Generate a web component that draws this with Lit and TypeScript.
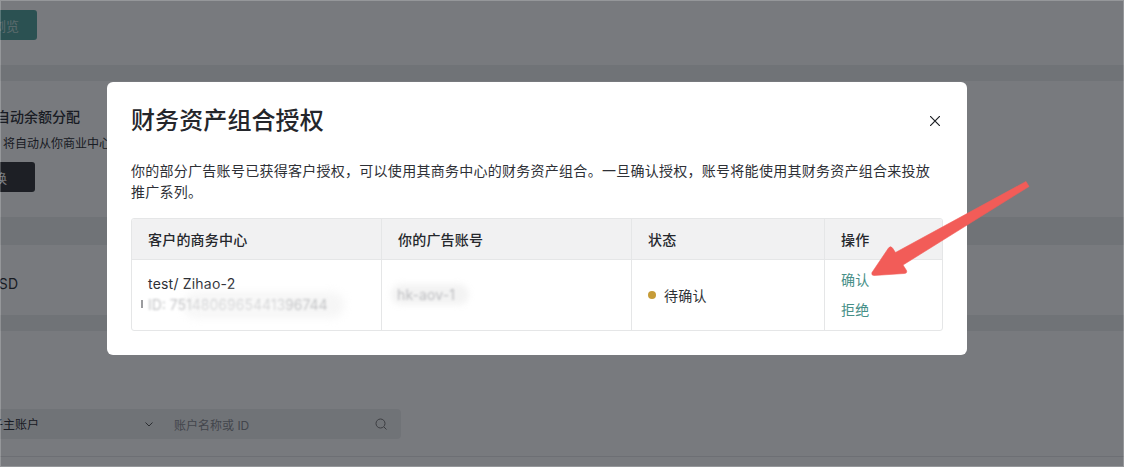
import { LitElement, html, css, svg } from "lit";
import { customElement } from "lit/decorators.js";

@customElement("app-root")
export class AppRoot extends LitElement {
  static styles = css`
    :host {
      display: block;
      position: relative;
      width: 1124px;
      height: 467px;
      overflow: hidden;
      background: #f3f3f4;
      font-family: Inter, "Noto Sans CJK SC", "Liberation Sans", sans-serif;
      font-size: 14px;
      color: #2e3036;
    }
    .page { display: flex; flex-direction: column; height: 467px; }
    .band { background: #eeeff0; flex: none; }
    .b16 { height: 16px; }
    .b28 { height: 28px; }
    .card { background: #fff; flex: none; overflow: hidden; }
    .s1 { height: 65px; padding-top: 10px; box-sizing: border-box; }
    .s2 { height: 136px; padding-top: 26px; box-sizing: border-box; }
    .s3 { height: 70px; display: flex; align-items: center; padding-top: 6px; box-sizing: border-box; }
    .s4 { height: 125px; padding-top: 78px; box-sizing: border-box; }
    .s5 { flex: 1; background: #fff; border-top: 1px solid #e6e7e8; }
    .btn { display: flex; align-items: center; height: 30px; border-radius: 0 3px 3px 0; box-sizing: border-box; white-space: nowrap; overflow: hidden; }
    .teal { width: 37px; background: #55a59e; color: rgba(255, 255, 255, 0.62); font-size: 13px; }
    .teal span { margin-left: -7px; }
    .black { width: 35px; background: #36373b; color: #fff; font-size: 13px; margin-top: 8px; }
    .black span { margin-left: -19px; }
    .sub-t { font-size: 14px; font-weight: 500; line-height: 20px; white-space: nowrap; margin-left: -4px; }
    .sub-d { font-size: 12px; line-height: 20px; margin-top: 7px; white-space: nowrap; margin-left: 3px; }
    .usd { margin-left: -12px; font-size: 14px; letter-spacing: 0.3px; }
    .filter { width: 401px; height: 30px; background: #eeeff0; border-radius: 0 4px 4px 0; display: flex; align-items: center; overflow: hidden; }
    .select { width: 160px; display: flex; align-items: center; justify-content: space-between; padding-right: 7px; box-sizing: border-box; font-size: 12px; flex: none; }
    .select span { margin-left: -9px; padding-bottom: 2px; }
    .input { flex: 1; display: flex; align-items: center; justify-content: space-between; padding: 0 14px; color: #8a8c90; font-size: 12px; }
    .scrim { position: absolute; inset: 0; background: rgba(10, 12, 20, 0.55); box-shadow: inset 0 0 0 1px rgba(255, 255, 255, 0.22); }
    .modal {
      position: absolute; left: 107px; top: 82px; width: 860px; height: 273px;
      background: #fff; border-radius: 6px; box-sizing: border-box; padding: 24px;
      display: flex; flex-direction: column;
    }
    .head { display: flex; justify-content: space-between; align-items: center; height: 30px; }
    h2 { margin: 0; font-size: 24px; font-weight: 500; line-height: 30px; color: #24262b; letter-spacing: 0.1px; }
    .close { display: flex; margin-right: 3px; }
    .desc { margin: 24px 0 0; line-height: 21px; letter-spacing: 0.27px; color: #2e3036; width: 800px; }
    .table {
      margin-top: 16px; width: 812px; height: 113px; border: 1px solid #e5e6e7; border-radius: 3px;
      box-sizing: border-box; display: grid; grid-template-columns: 249px 250px 193px 1fr; grid-template-rows: 40px 1fr;
      overflow: hidden;
    }
    .cell { box-sizing: border-box; padding: 0 16px; display: flex; flex-direction: column; justify-content: center; border-left: 1px solid #e5e6e7; min-width: 0; }
    .cell:nth-child(4n+1) { border-left: none; }
    .th { background: #f1f1f2; border-bottom: 1px solid #e5e6e7; font-weight: 500; height: 41px; padding-bottom: 1px; color: #25272c; letter-spacing: 0.2px; }
    .name { line-height: 20px; letter-spacing: 0.2px; }
    .smear { position: relative; margin-top: 1px; height: 20px; white-space: nowrap; color: #c4c5c7; font-size: 14px; line-height: 20px; isolation: isolate; }
    .smear .t { filter: blur(0.8px); font-weight: 400; }
    .smear::before { content: ""; position: absolute; z-index: -1; left: 36px; top: -3px; width: 160px; height: 26px; background: #f6f6f6; border-radius: 12px; filter: blur(4px); }
    .smear::after { content: ""; position: absolute; left: 40px; top: 3px; width: 100px; height: 15px; background: rgba(255, 255, 255, 0.35); border-radius: 8px; filter: blur(3px); }
    .tick { position: absolute; left: -7px; top: 5px; width: 2px; height: 8px; background: #9b9c9f; filter: blur(0.6px); }
    .acct-wrap { position: relative; align-self: flex-start; margin-left: -1px; isolation: isolate; }
    .acct-wrap::before { content: ""; position: absolute; z-index: -1; left: -6px; right: -14px; top: -2px; bottom: -2px; background: #f3f3f3; border-radius: 12px; filter: blur(3px); }
    .acct { color: #bdbec1; filter: blur(0.8px); letter-spacing: 0.1px; }
    .status { display: flex; flex-direction: row; align-items: center; justify-content: flex-start; gap: 8px; letter-spacing: 0.2px; }
    .dot { width: 8px; height: 8px; border-radius: 50%; background: #c69c38; }
    .ops { gap: 10px; color: #478f88; line-height: 20px; letter-spacing: 0.2px; }
    .arrow { position: absolute; left: 0; top: 0; width: 1124px; height: 467px; pointer-events: none; }
  `;

  render() {
    return html`
      <div class="page">
        <div class="card s1"><div class="btn teal"><span>浏览</span></div></div>
        <div class="band b16"></div>
        <div class="card s2">
          <div class="sub-t">自动余额分配</div>
          <div class="sub-d">将自动从你商业中心的余额中分配</div>
          <div class="btn black"><span>更换</span></div>
        </div>
        <div class="band b28"></div>
        <div class="card s3"><span class="usd">USD</span></div>
        <div class="band b16"></div>
        <div class="card s4">
          <div class="filter">
            <div class="select"><span>子主账户</span>
              <svg width="8" height="5" viewBox="0 0 8 5" fill="none" stroke="#555" stroke-width="1"><path d="M0.5 0.5l3.5 3.5 3.5-3.5" /></svg>
            </div>
            <div class="input"><span>账户名称或 ID</span>
              <svg width="12" height="12" viewBox="0 0 12 12" fill="none" stroke="#777" stroke-width="1"><circle cx="5.5" cy="5.5" r="4.5" /><path d="M9 9l2.5 2.5" /></svg>
            </div>
          </div>
        </div>
        <div class="s5"></div>
      </div>
      <div class="scrim"></div>
      <div class="modal">
        <div class="head">
          <h2>财务资产组合授权</h2>
          <span class="close">
            <svg width="10" height="10" viewBox="0 0 10 10" fill="none" stroke="#1d1f24" stroke-width="1.2"><path d="M0 0l10 10M10 0L0 10" /></svg>
          </span>
        </div>
        <p class="desc">你的部分广告账号已获得客户授权，可以使用其商务中心的财务资产组合。一旦确认授权，账号将能使用其财务资产组合来投放推广系列。</p>
        <div class="table">
          <div class="cell th">客户的商务中心</div>
          <div class="cell th">你的广告账号</div>
          <div class="cell th">状态</div>
          <div class="cell th">操作</div>
          <div class="cell">
            <div class="name">test/ Zihao-2</div>
            <div class="smear"><span class="tick"></span><div class="t">ID: 7514806965441396744</div></div>
          </div>
          <div class="cell"><div class="acct-wrap"><div class="acct">hk-aov-1</div></div></div>
          <div class="cell status"><span class="dot"></span><span>待确认</span></div>
          <div class="cell ops"><span>确认</span><span>拒绝</span></div>
        </div>
      </div>
      <svg class="arrow" viewBox="0 0 1124 467">
        ${svg`<path d="M1026 181.5L1029 186.5L903 265L906.5 270.5Q907.5 273.5 904 273.5L874 275.5Q871 275.5 872 272.5L888.5 248Q890.5 245.5 892.5 248L895.5 252.5Z" fill="#f25c58" stroke="#f25c58" stroke-width="0.6" stroke-linejoin="round" />`}
      </svg>
    `;
  }
}
